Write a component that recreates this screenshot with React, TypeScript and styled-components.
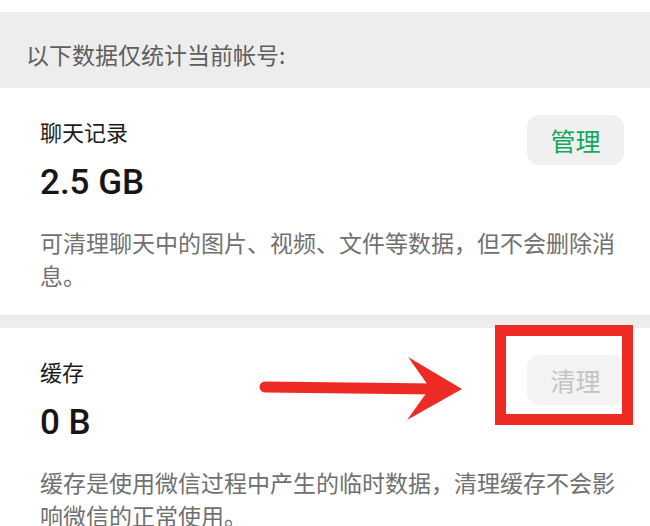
import styled, { createGlobalStyle } from 'styled-components';

const GlobalStyle = createGlobalStyle`
  html, body {
    margin: 0;
    padding: 0;
    background: #fff;
  }
  body {
    font-family: "Noto Sans CJK SC", "Noto Sans", sans-serif;
  }
`;

const Page = styled.div`
  position: relative;
  width: 650px;
  height: 526px;
  overflow: hidden;
  background: #fff;
  padding-top: 12px;
  box-sizing: border-box;
`;

const Notice = styled.div`
  height: 76px;
  box-sizing: border-box;
  background: #ededed;
  display: flex;
  align-items: center;
  padding: 7px 0 0 26px;
  font-size: 23px;
  color: #5e5e5e;
`;

const Section = styled.section`
  padding: 27px 26px 23px 40px;
`;

const Head = styled.div`
  display: flex;
  justify-content: space-between;
  align-items: flex-start;
`;

const Title = styled.div`
  font-size: 22px;
  color: #1c1c1c;
  line-height: 32px;
`;

const Amount = styled.div`
  font-family: Roboto, "Liberation Sans", sans-serif;
  font-weight: 500;
  font-size: 35px;
  color: #161616;
  line-height: 44px;
  margin-top: 14px;
`;

const ActionButton = styled.button<{ $disabled?: boolean }>`
  width: 97px;
  height: 50px;
  padding: 0;
  border: none;
  border-radius: 12px;
  background: ${p => (p.$disabled ? '#f3f3f3' : '#f0f0f0')};
  color: ${p => (p.$disabled ? '#c4c4c4' : '#12a85a')};
  font-family: "Noto Sans CJK SC", sans-serif;
  font-size: 25px;
  cursor: pointer;
`;

const Desc = styled.p`
  margin: 21px 4px 0 0;
  font-size: 23px;
  line-height: 33px;
  color: #707070;
`;

const Divider = styled.div`
  height: 13px;
  background: #ededed;
`;

const Highlight = styled.div`
  position: absolute;
  left: 495px;
  top: 325px;
  width: 138px;
  height: 100px;
  box-sizing: border-box;
  border: 11px solid #ee2a24;
`;

const Arrow = styled.svg`
  position: absolute;
  left: 250px;
  top: 350px;
`;

export default function App() {
  return (
    <>
      <GlobalStyle />
      <Page>
        <Notice>以下数据仅统计当前帐号:</Notice>
        <Section>
          <Head>
            <div>
              <Title>聊天记录</Title>
              <Amount>2.5 GB</Amount>
            </div>
            <ActionButton>管理</ActionButton>
          </Head>
          <Desc>可清理聊天中的图片、视频、文件等数据，但不会删除消息。</Desc>
        </Section>
        <Divider />
        <Section>
          <Head>
            <div>
              <Title>缓存</Title>
              <Amount>0 B</Amount>
            </div>
            <ActionButton $disabled>清理</ActionButton>
          </Head>
          <Desc>缓存是使用微信过程中产生的临时数据，清理缓存不会影响微信的正常使用。</Desc>
        </Section>
        <Highlight />
        <Arrow width="220" height="80" viewBox="0 0 220 80">
          <line x1="15" y1="37" x2="185" y2="39" stroke="#ee2a24" strokeWidth="11" strokeLinecap="round" />
          <polygon points="158,7 212,39 157,70 180,38" fill="#ee2a24" />
        </Arrow>
      </Page>
    </>
  );
}
